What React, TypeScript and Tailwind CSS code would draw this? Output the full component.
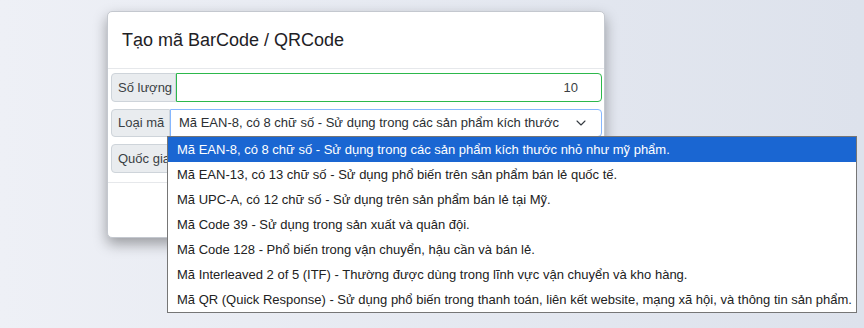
import { ChevronDown } from "lucide-react";

const options = [
  "Mã EAN-8, có 8 chữ số - Sử dụng trong các sản phẩm kích thước nhỏ như mỹ phẩm.",
  "Mã EAN-13, có 13 chữ số - Sử dụng phổ biến trên sản phẩm bán lẻ quốc tế.",
  "Mã UPC-A, có 12 chữ số - Sử dụng trên sản phẩm bán lẻ tại Mỹ.",
  "Mã Code 39 - Sử dụng trong sản xuất và quân đội.",
  "Mã Code 128 - Phổ biến trong vận chuyển, hậu cần và bán lẻ.",
  "Mã Interleaved 2 of 5 (ITF) - Thường được dùng trong lĩnh vực vận chuyển và kho hàng.",
  "Mã QR (Quick Response) - Sử dụng phổ biến trong thanh toán, liên kết website, mạng xã hội, và thông tin sản phẩm.",
];

const font = { fontFamily: '"Liberation Sans", Arial, sans-serif' };

export default function App() {
  return (
    <div
      className="relative w-[864px] h-[328px] overflow-hidden bg-gradient-to-r from-[#eef0f6] to-[#dde2ec] pt-[11px] pl-[107px] text-[#212529]"
      style={font}
    >
      <div className="w-[498px] h-[227px] bg-white border border-[#c4c8cf] rounded-[5px] shadow-[0_6px_14px_rgba(0,0,0,0.35)] flex flex-col">
        <div className="h-[57px] shrink-0 px-[14px] pt-[1px] flex items-center border-b border-[#e6e8eb]">
          <h1 className="text-[18px] font-medium text-[#1e2125]">Tạo mã BarCode / QRCode</h1>
        </div>
        <div className="h-[114px] shrink-0 pt-[4px] pl-[3px] pr-[2px] flex flex-col gap-[7px] border-b border-[#e6e8eb]">
          <div className="flex h-[29px]">
            <span className="w-[65px] shrink-0 flex items-center px-[6px] whitespace-nowrap bg-[#e9ecef] border border-[#ced4da] rounded-l-[4px] text-[13px] text-[#3a3f44]">
              Số lượng
            </span>
            <div className="flex-1 flex items-center justify-end pr-[23px] border border-[#2db84c] rounded-r-[4px] text-[13px] text-[#3a3f44]">
              10
            </div>
          </div>
          <div className="flex h-[28px]">
            <span className="w-[59px] shrink-0 flex items-center px-[6px] whitespace-nowrap bg-[#e9ecef] border border-[#ced4da] rounded-l-[4px] text-[13px] text-[#3a3f44]">
              Loại mã
            </span>
            <div className="flex-1 min-w-0 flex items-center pl-[8px] pr-[12px] border border-[#86b7fe] rounded-r-[4px] text-[13px] text-[#2b2f33]">
              <span className="flex-1 min-w-0 overflow-hidden whitespace-nowrap mr-[14px]">{options[0]}</span>
              <ChevronDown size={16} strokeWidth={1.6} className="shrink-0 text-[#343a40]" />
            </div>
          </div>
          <div className="flex h-[29px]">
            <span className="w-[70px] shrink-0 flex items-center px-[6px] whitespace-nowrap bg-[#e9ecef] border border-[#ced4da] rounded-l-[4px] text-[13px] text-[#3a3f44]">
              Quốc gia
            </span>
            <div className="flex-1 border border-[#ced4da] rounded-r-[4px]" />
          </div>
        </div>
        <div className="flex-1" />
      </div>

      <ul className="absolute left-[167px] top-[136px] w-[690px] bg-white border border-[#767676] text-[13px] text-[#222]">
        {options.map((o, i) => (
          <li
            key={o}
            className={
              "h-[25px] flex items-center pl-[9px] whitespace-nowrap " +
              (i === 0 ? "bg-[#1a66d2] text-white" : "")
            }
          >
            {o}
          </li>
        ))}
      </ul>
    </div>
  );
}
